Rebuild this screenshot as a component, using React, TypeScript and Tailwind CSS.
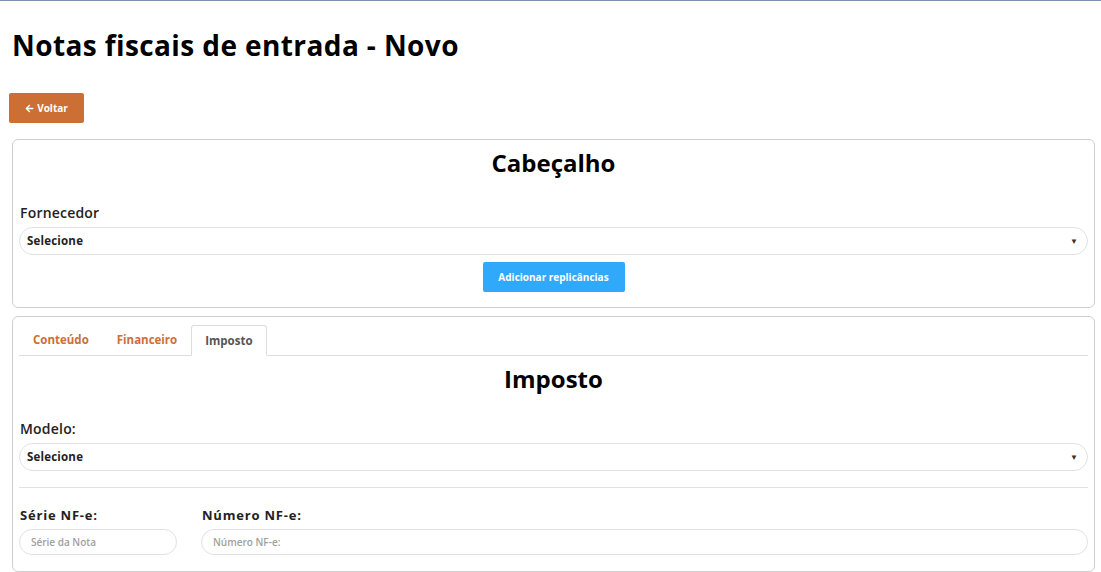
import React from 'react';
import { FaArrowLeft } from 'react-icons/fa';

const font = { fontFamily: '"Open Sans", "Liberation Sans", sans-serif' };

const FakeSelect: React.FC<{ label: string }> = ({ label }) => (
  <div className="flex h-[28px] items-center justify-between rounded-full border border-[#e2e2e2] bg-white pl-[7px] pr-[9px]">
    <span className="text-[11.5px] font-bold tracking-[0.2px] text-[#222]">{label}</span>
    <span className="text-[8px] leading-none text-[#333]">▼</span>
  </div>
);

const App: React.FC = () => {
  const tabs = ['Conteúdo', 'Financeiro', 'Imposto'];
  const active = 'Imposto';

  return (
    <div className="min-h-[572px] w-full border-t border-[#7d92b0] bg-white text-black" style={font}>
      {/* Page title */}
      <h1 className="pl-[12px] pt-[27px] text-[28px] font-bold leading-[34px] tracking-[0.4px] text-black">
        Notas fiscais de entrada - Novo
      </h1>

      <div className="pl-[9px] pt-[31px]">
        <button className="flex h-[30px] w-[75px] items-center justify-center gap-[3px] rounded-[2px] bg-[#cc6f35] text-[10px] font-bold text-white">
          <FaArrowLeft className="h-[9px] w-[9px]" />
          Voltar
        </button>
      </div>

      {/* Cabeçalho */}
      <div className="ml-[12px] mt-[16px] w-[1083px] rounded-[6px] border border-[#cfcfcf] px-[6px] pb-[15px] pt-[9px]">
        <h2 className="text-center text-[24px] font-bold leading-[28px]">Cabeçalho</h2>
        <div className="pl-[1px] pt-[27px] text-[14px] font-semibold leading-[18px] tracking-[0.2px] text-[#222]">
          Fornecedor
        </div>
        <div className="pt-[5px]">
          <FakeSelect label="Selecione" />
        </div>
        <div className="flex justify-center pt-[7px]">
          <button className="h-[30px] w-[142px] rounded-[2px] bg-[#31a9fb] text-[10px] font-bold text-white">
            Adicionar replicâncias
          </button>
        </div>
      </div>

      {/* Tabs card */}
      <div className="ml-[12px] mt-[8px] w-[1083px] rounded-[6px] border border-[#cfcfcf] px-[6px] pb-[16px] pt-[8px]">
        <div className="flex border-b border-[#dddddd]">
          {tabs.map((t) => (
            <div
              key={t}
              className={
                t === active
                  ? '-mb-px flex h-[31px] items-center rounded-t-[3px] border border-b-white border-[#dddddd] bg-white px-[13px] text-[11.5px] font-bold text-[#555]'
                  : 'flex h-[30px] items-center border border-transparent px-[13px] text-[11.5px] font-bold text-[#cc6f35]'
              }
            >
              {t}
            </div>
          ))}
        </div>

        <h2 className="pt-[9px] text-center text-[24px] font-bold leading-[28px]">Imposto</h2>
        <div className="pl-[1px] pt-[27px] text-[14px] font-semibold leading-[18px] tracking-[0.2px] text-[#222]">
          Modelo:
        </div>
        <div className="pt-[5px]">
          <FakeSelect label="Selecione" />
        </div>

        <hr className="mt-[16px] border-t border-[#e2e2e2]" />

        <div className="flex gap-[24px] pt-[18px]">
          <div className="w-[158px]">
            <div className="pl-[1px] text-[13px] font-bold leading-[18px] tracking-[0.8px] text-[#222]">Série NF-e:</div>
            <input
              className="mt-[5px] h-[26px] w-full rounded-full border border-[#e2e2e2] pl-[11px] text-[10px] font-semibold outline-none placeholder:text-[#a0a0a0]"
              placeholder="Série da Nota"
              style={font}
            />
          </div>
          <div className="flex-1">
            <div className="pl-[1px] text-[13px] font-bold leading-[18px] tracking-[0.8px] text-[#222]">Número NF-e:</div>
            <input
              className="mt-[5px] h-[26px] w-full rounded-full border border-[#e2e2e2] pl-[11px] text-[10px] font-semibold outline-none placeholder:text-[#a0a0a0]"
              placeholder="Número NF-e:"
              style={font}
            />
          </div>
        </div>
      </div>
    </div>
  );
};

export default App;
